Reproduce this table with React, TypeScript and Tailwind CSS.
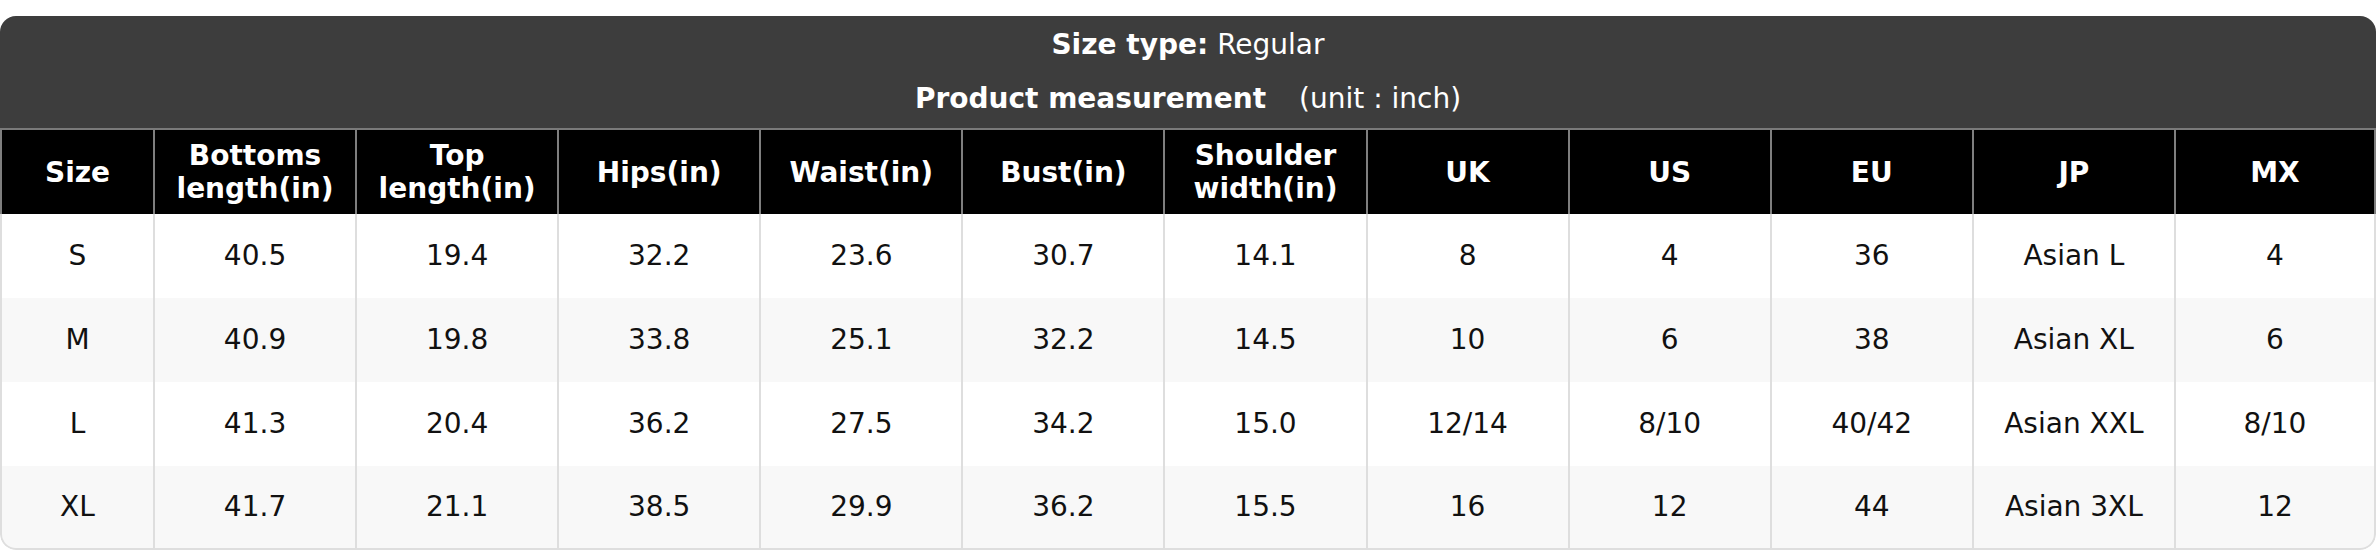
import React from "react";

const headers: string[][] = [
  ["Size"],
  ["Bottoms", "length(in)"],
  ["Top", "length(in)"],
  ["Hips(in)"],
  ["Waist(in)"],
  ["Bust(in)"],
  ["Shoulder", "width(in)"],
  ["UK"],
  ["US"],
  ["EU"],
  ["JP"],
  ["MX"],
];

const rows: string[][] = [
  ["S", "40.5", "19.4", "32.2", "23.6", "30.7", "14.1", "8", "4", "36", "Asian L", "4"],
  ["M", "40.9", "19.8", "33.8", "25.1", "32.2", "14.5", "10", "6", "38", "Asian XL", "6"],
  ["L", "41.3", "20.4", "36.2", "27.5", "34.2", "15.0", "12/14", "8/10", "40/42", "Asian XXL", "8/10"],
  ["XL", "41.7", "21.1", "38.5", "29.9", "36.2", "15.5", "16", "12", "44", "Asian 3XL", "12"],
];

export default function App() {
  return (
    <div className="w-[2376px] h-[552px] bg-white pt-4 font-['DejaVu_Sans',sans-serif] text-[28px] leading-[1.2]">
      <div className="rounded-2xl overflow-hidden">
        <div className="bg-[#3d3d3d] text-white pt-[2px] pb-[2px]">
          <div className="h-[54px] flex items-center justify-center">
            <span className="font-bold">Size type:</span>
            <span className="ml-[9px]">Regular</span>
          </div>
          <div className="h-[54px] flex items-center justify-center">
            <span className="font-bold">Product measurement</span>
            <span className="ml-[33px]">(unit : inch)</span>
          </div>
        </div>
        <div className="grid grid-cols-[153px_repeat(11,1fr)] border-t-2 border-[#7a7a7a]">
          {headers.map((h, i) => (
            <div
              key={i}
              className={`h-[84px] bg-black text-white font-bold flex flex-col items-center justify-center text-center leading-[33px] border-l-2 border-[#7f7f7f] ${
                i === headers.length - 1 ? "border-r-2" : ""
              }`}
            >
              {h.map((line, j) => (
                <span key={j}>{line}</span>
              ))}
            </div>
          ))}
          {rows.map((r, ri) =>
            r.map((c, ci) => (
              <div
                key={`${ri}-${ci}`}
                className={`h-[84px] flex items-center justify-center text-[#111] border-l-2 border-[#dedede] ${
                  ri % 2 === 1 ? "bg-[#f8f8f8]" : "bg-white"
                } ${ci === r.length - 1 ? "border-r-2" : ""} ${
                  ri === rows.length - 1 ? "border-b-2" : ""
                } ${ri === rows.length - 1 && ci === 0 ? "rounded-bl-2xl" : ""} ${
                  ri === rows.length - 1 && ci === r.length - 1 ? "rounded-br-2xl" : ""
                }`}
              >
                {c}
              </div>
            ))
          )}
        </div>
      </div>
    </div>
  );
}
